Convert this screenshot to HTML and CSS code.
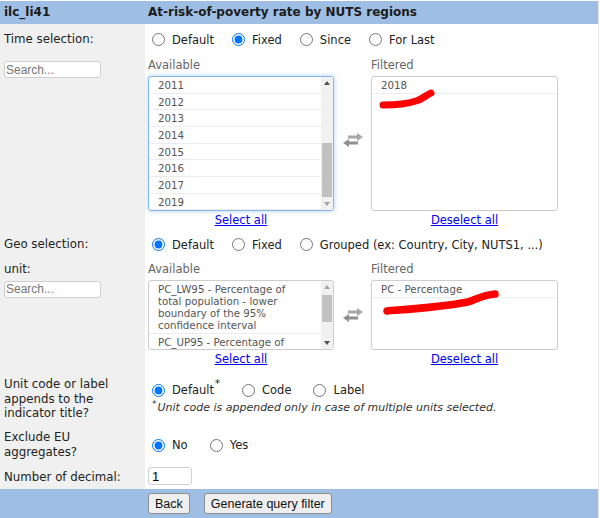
FILE: index.html
```html
<!DOCTYPE html>
<html>
<head>
<meta charset="utf-8">
<title>At-risk-of-poverty rate by NUTS regions</title>
<link rel="stylesheet" href="styles.css">
</head>
<body>
<div class="page">
  <div class="hd hd1">ilc_li41</div>
  <div class="hd hd2">At-risk-of-poverty rate by NUTS regions</div>

  <div class="lab r-time">Time selection:</div>
  <div class="val opts">
    <label class="opt"><input type="radio" name="time">Default</label>
    <label class="opt"><input type="radio" name="time" checked>Fixed</label>
    <label class="opt"><input type="radio" name="time">Since</label>
    <label class="opt"><input type="radio" name="time">For Last</label>
  </div>

  <div class="lab r-list1"><input class="search" type="text" placeholder="Search..."></div>
  <div class="val dual d1">
    <div class="side">
      <div class="cap">Available</div>
      <div class="box tall focus">
        <div class="items">
          <div class="it">2011</div>
          <div class="it">2012</div>
          <div class="it">2013</div>
          <div class="it">2014</div>
          <div class="it">2015</div>
          <div class="it">2016</div>
          <div class="it">2017</div>
          <div class="it">2019</div>
        </div>
        <div class="sb">
          <div class="sb-btn up"></div>
          <div class="sb-track"><div class="thumb" style="margin-top:54px;height:54px"></div></div>
          <div class="sb-btn down light"></div>
        </div>
      </div>
      <a class="lnk" href="#">Select all</a>
    </div>
    <div class="xfer x1">
      <svg width="20" height="14" viewBox="0 0 20 14"><path d="M5 2.5H14V0L20 4L14 8V5.5H5Z" fill="#a6a6a6"/><path d="M15 8.5H6V6L0 10L6 14V11.5H15Z" fill="#8f8f8f"/></svg>
    </div>
    <div class="side wide">
      <div class="cap">Filtered</div>
      <div class="box tall">
        <div class="items">
          <div class="it">2018</div>
        </div>
        <svg class="scrib" width="185" height="133" viewBox="0 0 185 133"><path d="M11 28 C 23 28, 35 27, 44 24 C 51 22, 54 18, 59 16" fill="none" stroke="#ff0000" stroke-width="7" stroke-linecap="round"/></svg>
      </div>
      <a class="lnk" href="#">Deselect all</a>
    </div>
  </div>

  <div class="lab r-geo">Geo selection:</div>
  <div class="val opts">
    <label class="opt"><input type="radio" name="geo" checked>Default</label>
    <label class="opt"><input type="radio" name="geo">Fixed</label>
    <label class="opt"><input type="radio" name="geo">Grouped (ex: Country, City, NUTS1, ...)</label>
  </div>

  <div class="lab r-list2">unit:<input class="search s2" type="text" placeholder="Search..."></div>
  <div class="val dual d2">
    <div class="side">
      <div class="cap">Available</div>
      <div class="box short">
        <div class="items">
          <div class="it">PC_LW95 - Percentage of total population - lower boundary of the 95% confidence interval</div>
          <div class="it last">PC_UP95 - Percentage of</div>
        </div>
        <div class="sb">
          <div class="sb-btn up light"></div>
          <div class="sb-track"><div class="thumb" style="margin-top:2px;height:27px"></div></div>
          <div class="sb-btn down"></div>
        </div>
      </div>
      <a class="lnk" href="#">Select all</a>
    </div>
    <div class="xfer x2">
      <svg width="20" height="14" viewBox="0 0 20 14"><path d="M5 2.5H14V0L20 4L14 8V5.5H5Z" fill="#a6a6a6"/><path d="M15 8.5H6V6L0 10L6 14V11.5H15Z" fill="#8f8f8f"/></svg>
    </div>
    <div class="side wide">
      <div class="cap">Filtered</div>
      <div class="box short">
        <div class="items">
          <div class="it">PC - Percentage</div>
        </div>
        <svg class="scrib" width="185" height="68" viewBox="0 0 185 68"><path d="M15 30 C 40 28, 70 26, 96 21 C 105 18, 111 14, 123 13" fill="none" stroke="#ff0000" stroke-width="7.5" stroke-linecap="round"/></svg>
      </div>
      <a class="lnk" href="#">Deselect all</a>
    </div>
  </div>

  <div class="lab r-uc">Unit code or label appends to the indicator title?</div>
  <div class="val uc">
    <div class="opts-line wide-gap">
      <label class="opt"><input type="radio" name="uc" checked><span class="w">Default</span><span class="ast">*</span></label>
      <label class="opt"><input type="radio" name="uc">Code</label>
      <label class="opt"><input type="radio" name="uc">Label</label>
    </div>
    <div class="note"><span class="nast">*</span><span class="ntx">Unit code is appended only in case of multiple units selected.</span></div>
  </div>

  <div class="lab r-excl">Exclude EU aggregates?</div>
  <div class="val opts wide-gap">
    <label class="opt"><input type="radio" name="eu" checked>No</label>
    <label class="opt"><input type="radio" name="eu">Yes</label>
  </div>

  <div class="lab r-num">Number of decimal:</div>
  <div class="val numcell"><input class="num" type="text" value="1"></div>

  <div class="ftr">
    <button class="btn" type="button">Back</button>
    <button class="btn" type="button">Generate query filter</button>
  </div>
</div>
</body>
</html>
```

FILE: styles.css
```css
* { box-sizing: border-box; }
html, body { margin: 0; padding: 0; background: #fff; }
body {
  font-family: "DejaVu Sans", Verdana, sans-serif;
  font-size: 11.5px;
  color: #222;
}
.page {
  width: 599px;
  padding-top: 1px;
  border-right: 1px solid #e6e6e6;
  display: grid;
  grid-template-columns: 145px 453px;
  grid-template-rows: 23px 29px 178px 25px 114px 55px 38px 26px 29px;
}
.hd {
  background: #9ebee4;
  line-height: 23px;
  font-size: 12px;
  font-weight: bold;
  color: #1b1b1b;
  white-space: nowrap;
}
.hd1 { padding-left: 4px; }
.hd2 { padding-left: 3px; }

.lab {
  background: #f0f0f0;
  padding: 0 5px 0 4px;
  font-size: 11.8px;
  line-height: 14.6px;
  color: #222;
}
.r-time { padding-top: 8px; }
.r-list1 { padding-top: 8px; }
.r-geo { padding-top: 6px; }
.r-list2 { padding-top: 6px; }
.r-uc { padding-top: 7px; }
.r-excl { padding-top: 5px; }
.r-num { padding-top: 7px; }

.val { background: #fff; padding-left: 3px; }
.opts { display: flex; align-items: center; padding-left: 7px; padding-top: 2px; }
.opts-line { display: flex; align-items: center; height: 16px; }
.opt {
  display: inline-flex;
  align-items: center;
  margin-right: 18px;
  line-height: 16px;
  font-size: 11.5px;
  color: #222;
  white-space: nowrap;
}
.wide-gap .opt { margin-right: 22px; }
.opt input {
  margin: 0 7px 0 0;
  width: 13px;
  height: 13px;
  flex: none;
}
.ast {
  align-self: flex-start;
  font-size: 10px;
  line-height: 10px;
  margin-left: 1px;
  margin-top: -3px;
}
.uc { padding: 12px 0 0 7px; }
.note {
  display: flex;
  margin-top: 3px;
  font-size: 11px;
  line-height: 14px;
  color: #333;
  white-space: nowrap;
}
.nast {
  font-size: 9px;
  line-height: 9px;
  margin-top: -1px;
  margin-right: 1px;
}
.ntx { font-style: italic; }

.search {
  display: block;
  width: 97px;
  height: 17px;
  border: 1px solid #cfcfcf;
  border-radius: 3px;
  padding: 0 1px;
  font: 12px "Liberation Sans", Arial, sans-serif;
  color: #333;
  background: #fff;
}
.search::placeholder { color: #767676; }
.s2 { margin-top: 4px; }

.dual { display: flex; align-items: flex-start; }
.d1 { padding-top: 4px; }
.d2 { padding-top: 5px; }
.side { width: 186px; display: flex; flex-direction: column; }
.side.wide { width: 187px; }
.cap {
  line-height: 15px;
  height: 16px;
  padding-top: 1px;
  margin-bottom: 3px;
  color: #666;
  font-size: 11.5px;
}
.box {
  position: relative;
  display: flex;
  border: 1px solid #cdcdcd;
  border-radius: 3px;
  background: #fff;
  overflow: hidden;
}
.box.tall { height: 135px; }
.box.short { height: 70px; }
.box.focus {
  border-color: #86b8ea;
  box-shadow: 0 0 5px rgba(102, 170, 235, 0.55);
}
.items { flex: 1; min-width: 0; overflow: hidden; }
.it {
  padding: 2px 14px 1.67px 9px;
  line-height: 12px;
  font-size: 10.25px;
  color: #555;
  border-bottom: 1px solid #ececec;
}
.it.last { border-bottom: 0; white-space: nowrap; }
.sb {
  width: 12px;
  flex: none;
  background: #f1f1f1;
  display: flex;
  flex-direction: column;
}
.sb-btn {
  height: 12px;
  flex: none;
  display: flex;
  align-items: center;
  justify-content: center;
}
.sb-btn::before {
  content: "";
  border-left: 3.5px solid transparent;
  border-right: 3.5px solid transparent;
}
.up::before { border-bottom: 4px solid #505050; }
.down::before { border-top: 4px solid #505050; }
.up.light::before { border-bottom-color: #a3a3a3; }
.down.light::before { border-top-color: #a3a3a3; }
.sb-track { flex: 1; }
.thumb { margin-left: 1px; margin-right: 1px; background: #c1c1c1; }

.scrib { position: absolute; left: 0; top: 0; }

.xfer { width: 37px; display: flex; justify-content: center; }
.x1 svg { margin-top: 76px; }
.x2 svg { margin-top: 47px; }

.lnk {
  display: block;
  margin-top: 2px;
  text-align: center;
  line-height: 15px;
  font-size: 11.5px;
  color: #0000ee;
  text-decoration: underline;
}

.numcell { display: flex; align-items: center; }
.num {
  width: 44px;
  height: 18px;
  border: 1px solid #cfcfcf;
  border-radius: 3px;
  padding: 0 3px;
  font: 13px "Liberation Sans", Arial, sans-serif;
  color: #000;
  background: #fff;
}

.ftr {
  grid-column: 1 / -1;
  background: #9ebee4;
  display: flex;
  align-items: center;
  padding-left: 148px;
}
.btn {
  height: 21px;
  padding: 0 6px;
  margin-right: 14px;
  font: 12.5px "Liberation Sans", Arial, sans-serif;
  color: #111;
  background: #efefef;
  border: 1px solid #8f8f8f;
  border-radius: 3px;
}
```
